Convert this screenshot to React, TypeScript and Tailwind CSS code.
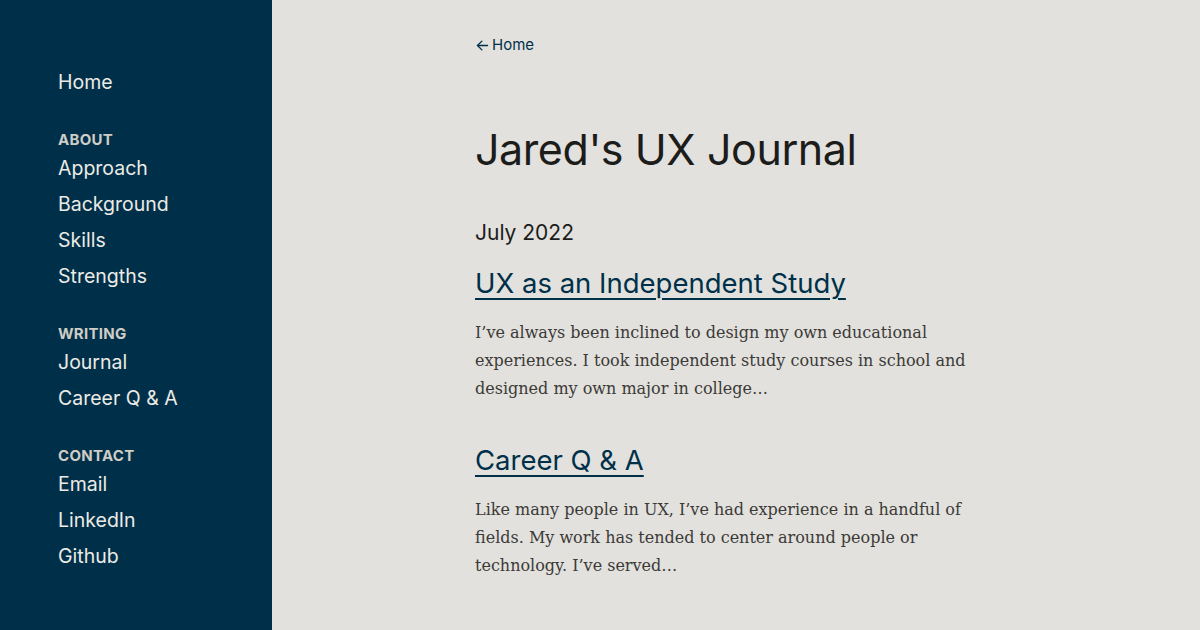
const sections = [
  { title: "About", links: ["Approach", "Background", "Skills", "Strengths"] },
  { title: "Writing", links: ["Journal", "Career Q & A"] },
  { title: "Contact", links: ["Email", "LinkedIn", "Github"] },
];

const posts = [
  {
    title: "UX as an Independent Study",
    excerpt:
      "I\u2019ve always been inclined to design my own educational experiences. I took independent study courses in school and designed my own major in college\u2026",
  },
  {
    title: "Career Q & A",
    excerpt:
      "Like many people in UX, I\u2019ve had experience in a handful of fields. My work has tended to center around people or technology. I\u2019ve served\u2026",
  },
];

function Sidebar() {
  return (
    <nav className="flex w-[272px] shrink-0 flex-col bg-[#003049] pl-[58px] pt-[68px] text-[#ecebe6]">
      <a className="mb-[4px] block text-[19.5px] leading-[28px]">Home</a>
      {sections.map((s) => (
        <div key={s.title} className="mt-[30px]">
          <h3 className="text-[15px] font-bold uppercase leading-[20px] tracking-[0.02em] text-[#cfcdc6]">
            {s.title}
          </h3>
          <ul className="flex flex-col">
            {s.links.map((l) => (
              <li key={l} className="text-[19.5px] leading-[36px]">
                {l}
              </li>
            ))}
          </ul>
        </div>
      ))}
    </nav>
  );
}

export default function App() {
  return (
    <div
      className="flex h-[630px] w-[1200px] overflow-hidden bg-[#e2e1dd]"
      style={{ fontFamily: "Inter, 'Noto Sans', sans-serif" }}
    >
      <Sidebar />
      <main className="flex-1 pl-[203px] pt-[35px]">
        <a className="flex items-center gap-[2px] text-[15px] leading-[20px] text-[#003049]">
          <svg width="15" height="15" viewBox="0 0 24 24" fill="none" stroke="currentColor" strokeWidth="2.2" strokeLinecap="round" strokeLinejoin="round">
            <path d="M20 12H4" />
            <path d="M11 19l-7-7 7-7" />
          </svg>
          Home
        </a>
        <h1 className="mt-[68px] text-[43px] leading-[52px] tracking-[-0.01em] text-[#1c1c1a]">
          Jared's UX Journal
        </h1>
        <h2 className="mt-[43px] text-[21px] leading-[30px] text-[#1c1c1a]">July 2022</h2>
        <div className="mt-[16px] flex flex-col gap-[38px]">
          {posts.map((p) => (
            <article key={p.title} className="w-[520px]">
              <a className="text-[27.5px] leading-[38px] text-[#003049] underline decoration-[2px] underline-offset-[5px]">
                {p.title}
              </a>
              <p
                className="mt-[17px] text-[16px] leading-[28px] text-[#3b3a37]"
                style={{ fontFamily: "'DejaVu Serif', serif" }}
              >
                {p.excerpt}
              </p>
            </article>
          ))}
        </div>
      </main>
    </div>
  );
}
